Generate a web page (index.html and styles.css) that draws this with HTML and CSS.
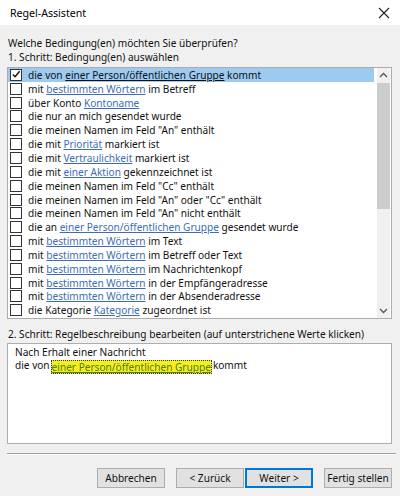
FILE: index.html
```html
<!DOCTYPE html>
<html lang="de">
<head>
<meta charset="utf-8">
<title>Regel-Assistent</title>
<link rel="stylesheet" href="styles.css">
</head>
<body>
<div class="dialog">
  <div class="titlebar">
    <span class="title">Regel-Assistent</span>
    <svg class="close" width="12" height="12" viewBox="0 0 12 12"><path d="M1 1L11 11M11 1L1 11" stroke="#222" stroke-width="1.1" fill="none"/></svg>
  </div>
  <div class="content">
    <div class="label q">Welche Bedingung(en) möchten Sie überprüfen?</div>
    <div class="label">1. Schritt: Bedingung(en) auswählen</div>
    <div class="listbox">
      <div class="rows">
        <div class="row sel"><span class="cb checked"><svg width="11" height="11" viewBox="0 0 11 11"><path d="M2 5.5L4.5 8L9.5 2" stroke="#111" stroke-width="1.6" fill="none"/></svg></span><span>die von <u class="lk">einer Person/öffentlichen Gruppe</u> kommt</span></div>
        <div class="row"><span class="cb"></span><span>mit <u class="lk">bestimmten Wörtern</u> im Betreff</span></div>
        <div class="row"><span class="cb"></span><span>über Konto <u class="lk">Kontoname</u></span></div>
        <div class="row"><span class="cb"></span><span>die nur an mich gesendet wurde</span></div>
        <div class="row"><span class="cb"></span><span>die meinen Namen im Feld "An" enthält</span></div>
        <div class="row"><span class="cb"></span><span>die mit <u class="lk">Priorität</u> markiert ist</span></div>
        <div class="row"><span class="cb"></span><span>die mit <u class="lk">Vertraulichkeit</u> markiert ist</span></div>
        <div class="row"><span class="cb"></span><span>die mit <u class="lk">einer Aktion</u> gekennzeichnet ist</span></div>
        <div class="row"><span class="cb"></span><span>die meinen Namen im Feld "Cc" enthält</span></div>
        <div class="row"><span class="cb"></span><span>die meinen Namen im Feld "An" oder "Cc" enthält</span></div>
        <div class="row"><span class="cb"></span><span>die meinen Namen im Feld "An" nicht enthält</span></div>
        <div class="row"><span class="cb"></span><span>die an <u class="lk">einer Person/öffentlichen Gruppe</u> gesendet wurde</span></div>
        <div class="row"><span class="cb"></span><span>mit <u class="lk">bestimmten Wörtern</u> im Text</span></div>
        <div class="row"><span class="cb"></span><span>mit <u class="lk">bestimmten Wörtern</u> im Betreff oder Text</span></div>
        <div class="row"><span class="cb"></span><span>mit <u class="lk">bestimmten Wörtern</u> im Nachrichtenkopf</span></div>
        <div class="row"><span class="cb"></span><span>mit <u class="lk">bestimmten Wörtern</u> in der Empfängeradresse</span></div>
        <div class="row"><span class="cb"></span><span>mit <u class="lk">bestimmten Wörtern</u> in der Absenderadresse</span></div>
        <div class="row"><span class="cb"></span><span>die Kategorie <u class="lk">Kategorie</u> zugeordnet ist</span></div>
      </div>
      <div class="scrollbar">
        <div class="arrow"><svg width="9" height="6" viewBox="0 0 9 6"><path d="M1 5L4.5 1.5L8 5" stroke="#555" stroke-width="1.3" fill="none"/></svg></div>
        <div class="track"><div class="thumb"></div></div>
        <div class="arrow"><svg width="9" height="6" viewBox="0 0 9 6"><path d="M1 1L4.5 4.5L8 1" stroke="#555" stroke-width="1.3" fill="none"/></svg></div>
      </div>
    </div>
    <div class="label step2">2. Schritt: Regelbeschreibung bearbeiten (auf unterstrichene Werte klicken)</div>
    <div class="desc">
      <div class="dl">Nach Erhalt einer Nachricht</div>
      <div class="dl">die von<span class="hl"><u>einer Person/öffentlichen Gruppe</u></span>kommt</div>
    </div>
    <div class="sep"></div>
    <div class="buttons">
      <button class="btn b1">Abbrechen</button>
      <button class="btn b2">&lt; Zurück</button>
      <button class="btn b3 default">Weiter &gt;</button>
      <button class="btn b4">Fertig stellen</button>
    </div>
  </div>
</div>
</body>
</html>
```

FILE: styles.css
```css
* { box-sizing: border-box; }
html, body { margin: 0; padding: 0; }
body {
  width: 400px;
  height: 496px;
  overflow: hidden;
  font-family: "Noto Sans", "Open Sans", sans-serif;
  font-size: 10.1px;
  color: #111;
  background: #f0f0f0;
}
.dialog { width: 400px; height: 496px; display: flex; flex-direction: column; }
.titlebar {
  height: 25px;
  background: #fff;
  display: flex;
  align-items: center;
  justify-content: space-between;
  padding: 0 10px 0 10px;
}
.title { font-size: 10.6px; color: #000; }
.content { padding: 11px 8px 0 7px; display: flex; flex-direction: column; }
.label { height: 14px; line-height: 14px; padding-left: 1px; white-space: nowrap; }
.listbox {
  margin-top: 3px;
  height: 252px;
  border: 1px solid #adadad;
  background: #fff;
  display: flex;
}
.rows { flex: 1; overflow: hidden; }
.row {
  height: 13.85px;
  display: flex;
  align-items: center;
  white-space: nowrap;
  margin-right: 3px;
}
.row.sel { background: #9ccaf0; }
.cb {
  width: 12px;
  height: 12px;
  border: 1px solid #333;
  background: #fff;
  margin: 0 6px 0 2px;
  flex: none;
  display: flex;
  align-items: center;
  justify-content: center;
}
.lk { color: #3d6db4; text-decoration: underline; text-decoration-color: #3d6db4; }
.row.sel .lk { color: #111; text-decoration-color: #111; }
.scrollbar {
  width: 13px;
  background: #f0f0f0;
  display: flex;
  flex-direction: column;
  margin-right: 1px;
}
.arrow { height: 14px; display: flex; align-items: center; justify-content: center; }
.track { flex: 1; }
.thumb { width: 13px; height: 126px; margin-top: 1px; background: #cdcdcd; }
.step2 { margin-top: 8px; }
.desc {
  margin-top: 2px;
  height: 101px;
  border: 1px solid #adadad;
  background: #fff;
  padding: 2px 7px;
}
.dl { height: 13px; line-height: 13px; white-space: nowrap; display: flex; align-items: center; }
.hl {
  display: inline-block;
  height: 14px;
  line-height: 14px;
  margin-top: 3px;
  background: #f4ef1c;
  color: #4c7d2a;
  outline: 1px dotted #333;
  outline-offset: -1px;
  padding: 0 1px;
  margin-left: 1px;
  margin-right: 1px;
}
.hl u { text-decoration-color: #4c7d2a; }
.sep {
  margin-top: 9px;
  height: 2px;
  border-top: 1px solid #a0a0a0;
  border-bottom: 1px solid #fff;
  margin-right: -4px;
}
.buttons { margin-top: 13px; display: flex; height: 20px; }
.btn {
  font-family: "Noto Sans", "Open Sans", sans-serif;
  font-size: 10.1px;
  color: #111;
  height: 20px;
  width: 68px;
  padding: 0;
  white-space: nowrap;
  background: #e1e1e1;
  border: 1px solid #adadad;
  border-radius: 0;
}
.b1 { margin-left: 90px; }
.b2 { margin-left: 11px; }
.b3 { margin-left: 1px; }
.b4 { margin-left: 11px; }
.btn.default { border: 2px solid #0078d7; }
```
